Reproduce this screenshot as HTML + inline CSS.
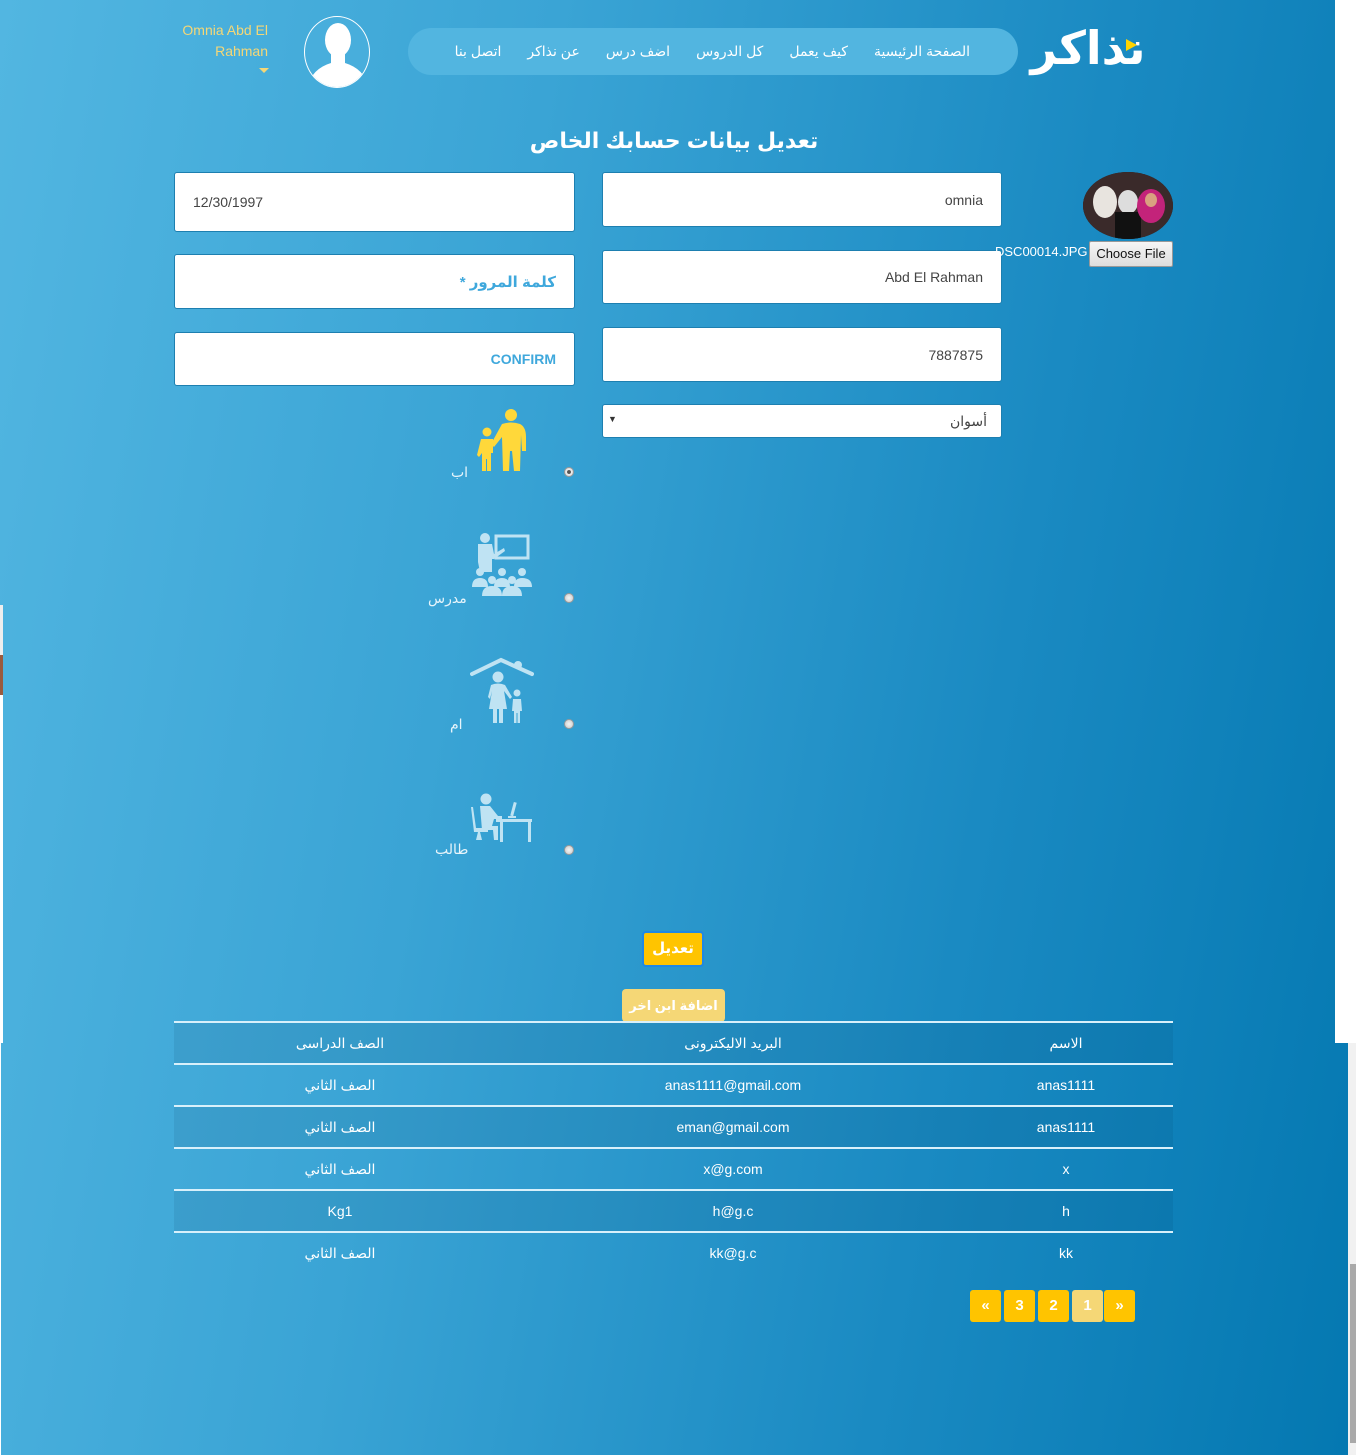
<!DOCTYPE html>
<html><head><meta charset="utf-8">
<style>
*{box-sizing:border-box;margin:0;padding:0}
html,body{width:1356px;height:1455px;overflow:hidden;background:#fff}
body{position:relative;font-family:"Liberation Sans","Noto Sans CJK SC","DejaVu Sans",sans-serif}
.bg{position:absolute;left:0;top:0;width:1348px;height:1455px;background:linear-gradient(100deg,#52b6e1 0%,#3aa4d5 35%,#1a8ac2 70%,#0478b1 100%)}
.abs{position:absolute}
.inp{position:absolute;background:#fff;border-radius:3px;border:1px solid #1d7fb0;font-size:14px;color:#444;display:flex;align-items:center;justify-content:flex-end;padding-right:18px}
.nav a{color:#fff;font-size:14px;text-decoration:none}
.tbl{position:absolute;left:174px;width:999px}
.row{position:relative;height:42px;border-top:2px solid #d8f0fb;color:#fff;font-size:14px}
.row.dark{background:rgba(0,40,80,0.09)}
.row span{position:absolute;top:12px;transform:translateX(-50%);white-space:nowrap}
.pg{position:absolute;top:1290px;width:31px;height:32px;background:#ffc400;border-radius:3px;color:#fff;font-weight:bold;font-size:15px;text-align:center;line-height:32px}
.radio{position:absolute;width:10px;height:10px;border-radius:50%;background:radial-gradient(#f4f4f4,#c8c8c8);border:1px solid #999}
.lbl{position:absolute;color:#e6f4fb;font-size:14px}
</style></head><body>
<div class="bg"></div>
<div class="abs" style="left:1335px;top:0;width:21px;height:1043px;background:#fff"></div>
<div class="abs" style="left:1348px;top:1043px;width:8px;height:412px;background:#f1f1f1"></div>
<div class="abs" style="left:1350px;top:1264px;width:6px;height:179px;background:#a9a9a9"></div>
<div class="abs" style="left:0;top:605px;width:3px;height:50px;background:#eee"></div>
<div class="abs" style="left:0;top:655px;width:3px;height:40px;background:#9a5a3e"></div>
<div class="abs" style="left:0;top:695px;width:3px;height:348px;background:#fff"></div>
<div class="abs" style="left:0;top:1043px;width:1px;height:412px;background:#fff"></div>

<div class="abs" style="left:1028px;top:18px;width:120px;height:60px;color:#fff;font-size:46px;font-weight:bold;line-height:60px;text-align:center;font-family:'DejaVu Sans',sans-serif">نذاكر</div>
<svg class="abs" style="left:1124px;top:38px" width="14" height="14"><polygon points="2,1 13,7 2,13" fill="#ffd400"/></svg>

<div class="abs nav" style="left:408px;top:28px;width:610px;height:47px;background:#52b5e0;border-radius:24px;direction:rtl;padding-right:48px;display:flex;align-items:center;gap:26px">
<a>الصفحة الرئيسية</a><a>كيف يعمل</a><a>كل الدروس</a><a>اضف درس</a><a>عن نذاكر</a><a>اتصل بنا</a>
</div>

<div class="abs" style="left:304px;top:16px;width:66px;height:72px;border-radius:50%;border:1.5px solid #fff;overflow:hidden;background:#48aedc">
<svg width="66" height="72" viewBox="0 0 66 72"><ellipse cx="33" cy="23" rx="13" ry="17" fill="#fff"/><rect x="26" y="34" width="14" height="12" fill="#fff"/><path d="M2 72 Q6 52 26 46 L40 46 Q60 52 64 72Z" fill="#fff"/></svg>
</div>
<div class="abs" style="left:160px;top:20px;width:108px;text-align:right;color:#f5d776;font-size:14px;line-height:21px">Omnia Abd El<br>Rahman</div>
<svg class="abs" style="left:259px;top:68px" width="10" height="6"><polygon points="0,0 10,0 5,5" fill="#f5d776"/></svg>

<div class="abs" style="left:0;width:1348px;top:128px;text-align:center;color:#fff;font-size:22px;font-weight:bold">تعديل بيانات حسابك الخاص</div>

<div class="inp" style="left:174px;top:172px;width:401px;height:60px;justify-content:flex-start;padding-left:18px">12/30/1997</div>
<div class="inp" style="left:174px;top:254px;width:401px;height:55px;color:#3fa8dc;font-weight:bold;font-size:15px;direction:rtl;justify-content:flex-start">كلمة المرور *</div>
<div class="inp" style="left:174px;top:332px;width:401px;height:54px;color:#3fa8dc;font-weight:bold;font-size:14px">CONFIRM</div>
<div class="inp" style="left:602px;top:172px;width:400px;height:55px">omnia</div>
<div class="inp" style="left:602px;top:250px;width:400px;height:54px">Abd El Rahman</div>
<div class="inp" style="left:602px;top:327px;width:400px;height:55px">7887875</div>
<div class="inp" style="left:602px;top:404px;width:400px;height:34px;padding-right:14px">أسوان<span style="position:absolute;left:5px;top:9px;font-size:9px;color:#333">▼</span></div>

<div class="abs" style="left:1083px;top:172px;width:90px;height:67px;border-radius:50%;overflow:hidden;background:#2a1c1c">
<svg width="90" height="67"><rect width="90" height="67" fill="#3a2a2a"/><ellipse cx="22" cy="30" rx="12" ry="16" fill="#e8e4df"/><ellipse cx="45" cy="30" rx="10" ry="12" fill="#ddd"/><rect x="32" y="40" width="26" height="27" fill="#111"/><ellipse cx="68" cy="34" rx="14" ry="17" fill="#c3237a"/><ellipse cx="68" cy="28" rx="6" ry="7" fill="#d9a080"/></svg>
</div>
<div class="abs" style="left:995px;top:244px;width:91px;text-align:right;color:#fff;font-size:13px">DSC00014.JPG</div>
<div class="abs" style="left:1089px;top:241px;width:84px;height:26px;background:linear-gradient(#f6f6f6,#ddd);border:1px solid #999;border-radius:2px;font-size:13px;color:#111;text-align:center;line-height:24px">Choose File</div>

<svg class="abs" style="left:474px;top:407px" width="56" height="66" viewBox="0 0 56 66" fill="#ffd83a">
<circle cx="37" cy="8" r="6"/><path d="M28 17 Q37 14 46 17 Q52 20 52 30 L52 44 L48 44 L47 28 L46 64 L40 64 L38 44 L36 44 L35 64 L29 64 L28 30 L20 40 L17 37Z"/>
<circle cx="13" cy="25" r="4.5"/><path d="M7 32 L19 32 L19 46 L17 46 L17 64 L13 64 L13 52 L12 52 L12 64 L8 64 L8 46 L5 50 L3 48Z"/></svg>
<svg class="abs" style="left:470px;top:532px" width="64" height="66" viewBox="0 0 64 66" fill="#bfe3f3">
<circle cx="15" cy="6" r="5"/><path d="M8 12 L22 12 L24 22 L34 16 L35 19 L24 27 L22 27 L22 40 L10 40 L8 30Z"/><rect x="26" y="4" width="32" height="22" fill="none" stroke="#bfe3f3" stroke-width="3"/>
<circle cx="10" cy="40" r="4"/><circle cx="32" cy="40" r="4"/><circle cx="52" cy="40" r="4"/><path d="M2 55 Q2 46 10 46 Q18 46 18 55Z M24 55 Q24 46 32 46 Q40 46 40 55Z M44 55 Q44 46 52 46 Q62 46 62 55Z"/>
<circle cx="22" cy="48" r="4"/><circle cx="42" cy="48" r="4"/><path d="M12 64 Q12 54 22 54 Q32 54 32 64Z M32 64 Q32 54 42 54 Q52 54 52 64Z"/></svg>
<svg class="abs" style="left:470px;top:657px" width="64" height="68" viewBox="0 0 64 68" fill="#bfe3f3">
<path d="M2 17 L31 3 L62 17" fill="none" stroke="#bfe3f3" stroke-width="4" stroke-linecap="round"/><circle cx="48" cy="8" r="4"/>
<circle cx="28" cy="20" r="5.5"/><path d="M21 28 Q28 25 35 28 L42 40 L40 42 L34 34 L37 52 L33 52 L33 66 L29 66 L29 52 L27 52 L27 66 L23 66 L23 52 L19 52 L22 34 L20 42 L18 40Z"/>
<circle cx="47" cy="36" r="3.5"/><path d="M43 42 L51 42 L52 54 L50 54 L50 66 L47.5 66 L47.5 56 L46.5 56 L46.5 66 L44 66 L44 54 L42 54Z"/></svg>
<svg class="abs" style="left:468px;top:792px" width="66" height="52" viewBox="0 0 66 52" fill="#bfe3f3">
<circle cx="18" cy="7" r="5.5"/><path d="M12 14 L22 14 L30 24 L34 24 L34 27 L26 27 L24 34 L30 34 L30 48 L26 48 L25 38 L14 38Z"/>
<path d="M3 15 L5 15 L8 36 L20 36 L20 40 L12 40 L14 48 L8 48 L10 40 L6 40Z"/><rect x="28" y="27" width="36" height="3"/><rect x="32" y="30" width="3" height="20"/><rect x="60" y="30" width="3" height="20"/><rect x="44" y="10" width="3" height="14" transform="rotate(15 45 17)"/><rect x="40" y="24" width="8" height="2"/></svg>

<div class="radio" style="left:564px;top:467px;background:radial-gradient(#555 30%,#eee 40%,#ccc)"></div>
<div class="radio" style="left:564px;top:593px"></div>
<div class="radio" style="left:564px;top:719px"></div>
<div class="radio" style="left:564px;top:845px"></div>
<div class="lbl" style="left:451px;top:464px">اب</div>
<div class="lbl" style="left:428px;top:590px">مدرس</div>
<div class="lbl" style="left:450px;top:716px">ام</div>
<div class="lbl" style="left:435px;top:841px">طالب</div>

<div class="abs" style="left:642px;top:931px;width:62px;height:36px;background:#ffc400;border:2px solid #1e88e5;border-radius:4px;color:#fff;font-weight:bold;font-size:15px;text-align:center;line-height:32px">تعديل</div>
<div class="abs" style="left:622px;top:989px;width:103px;height:33px;background:#f5d776;border-radius:4px;color:#fff;font-weight:bold;font-size:13px;text-align:center;line-height:33px">اضافة ابن اخر</div>

<div class="tbl" style="top:1021px">
<div class="row dark"><span style="left:892px">الاسم</span><span style="left:559px">البريد الاليكترونى</span><span style="left:166px">الصف الدراسى</span></div>
<div class="row"><span style="left:892px">anas1111</span><span style="left:559px">anas1111@gmail.com</span><span style="left:166px">الصف الثاني</span></div>
<div class="row dark"><span style="left:892px">anas1111</span><span style="left:559px">eman@gmail.com</span><span style="left:166px">الصف الثاني</span></div>
<div class="row"><span style="left:892px">x</span><span style="left:559px">x@g.com</span><span style="left:166px">الصف الثاني</span></div>
<div class="row dark"><span style="left:892px">h</span><span style="left:559px">h@g.c</span><span style="left:166px">Kg1</span></div>
<div class="row"><span style="left:892px">kk</span><span style="left:559px">kk@g.c</span><span style="left:166px">الصف الثاني</span></div>
</div>

<div class="pg" style="left:970px">«</div>
<div class="pg" style="left:1004px">3</div>
<div class="pg" style="left:1038px">2</div>
<div class="pg" style="left:1072px;background:#f5d776">1</div>
<div class="pg" style="left:1104px">»</div>
</body></html>
